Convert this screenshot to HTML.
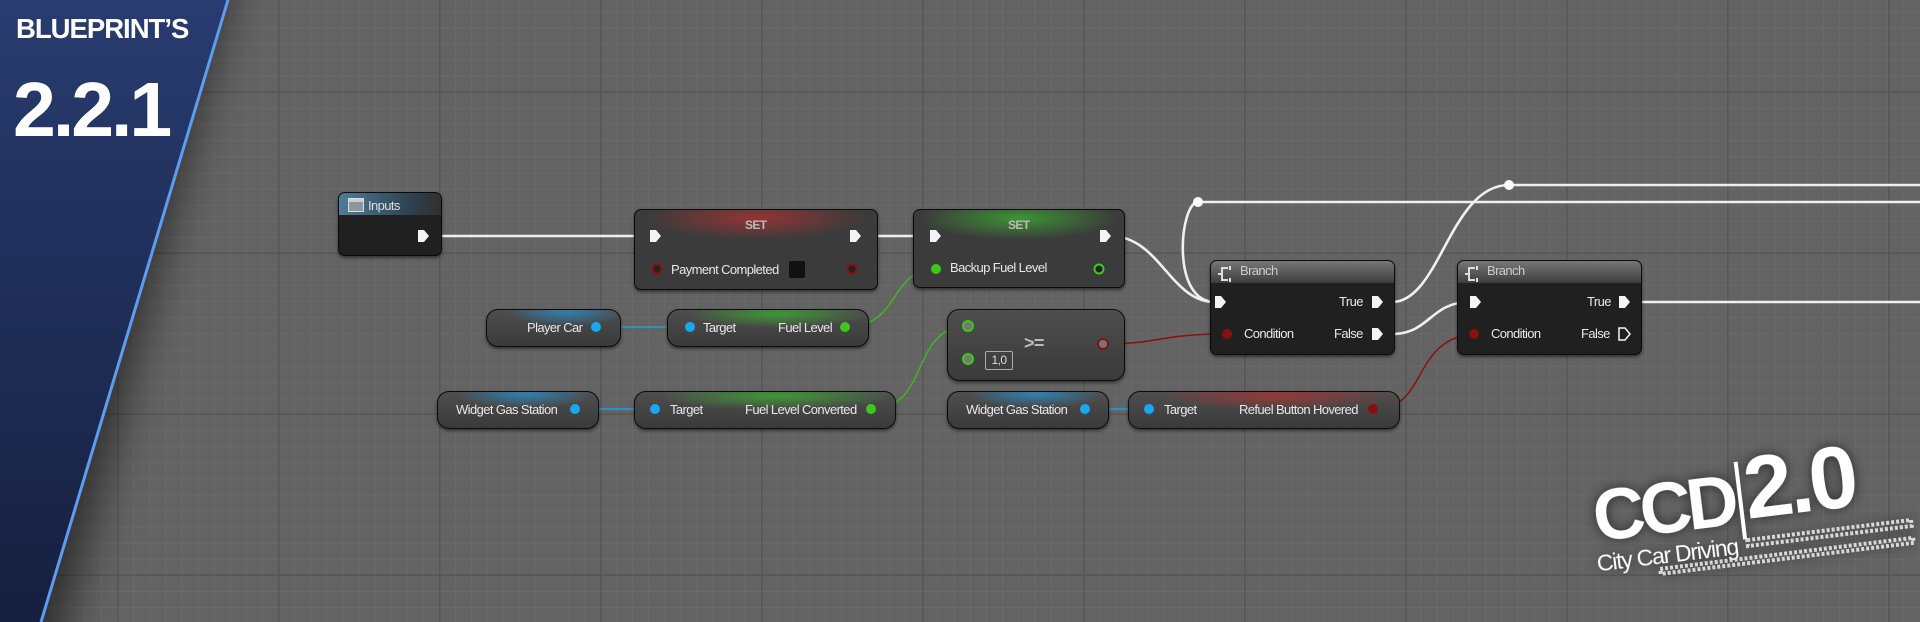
<!DOCTYPE html><html><head><meta charset="utf-8"><style>
*{margin:0;padding:0;box-sizing:border-box}
html,body{width:1920px;height:622px;overflow:hidden}
body{position:relative;background:#636363;font-family:"Liberation Sans",sans-serif;color:#e8e8e8;font-size:13px;letter-spacing:-0.6px}
.grid{position:absolute;inset:0;
background-image:linear-gradient(90deg,#565656 1.5px,transparent 1.5px),linear-gradient(0deg,#565656 1.5px,transparent 1.5px),linear-gradient(90deg,#6a6a6a 1px,transparent 1px),linear-gradient(0deg,#6a6a6a 1px,transparent 1px);
background-size:161px 161px,161px 161px,16.1px 16.1px,16.1px 16.1px;background-position:117px 0,0 93px,117px 0,0 93px}
.n{position:absolute;border:1px solid #0b0b0b;border-radius:7px;box-shadow:0 2px 3px rgba(0,0,0,.5)}
.ex{background:#1f201f}
.pu{background:linear-gradient(#4e4e4e,#3a3a3a);border-radius:12px}
.t{position:absolute;white-space:nowrap;margin-top:2px}
svg{position:absolute;left:0;top:0;overflow:hidden}
</style></head><body>
<div class="grid"></div>
<svg width="1920" height="622">
<defs><filter id="bl" x="-50%" y="-10%" width="200%" height="120%"><feGaussianBlur stdDeviation="22"/></filter></defs>
<polygon points="-100,-50 240,-50 50,680 -100,680" fill="#000" opacity=".55" filter="url(#bl)"/>
<g fill="none" stroke-width="2.6">
<path d="M442,236 H650" stroke="#f0f0f0"/>
<path d="M858,236 H930" stroke="#f0f0f0"/>
<path d="M1110,236 C1160,236 1170,302 1215,302" stroke="#f0f0f0"/>
<path d="M1198,202 C1180,202 1170,302 1215,302" stroke="#f0f0f0"/>
<path d="M1198,202 H1920" stroke="#f0f0f0"/>
<path d="M1392,302 C1440,302 1450,185 1509,185 H1920" stroke="#f0f0f0"/>
<path d="M1392,334 C1430,334 1430,302 1470,302" stroke="#f0f0f0"/>
<path d="M1622,302 H1920" stroke="#f0f0f0"/>
</g>
<circle cx="1198" cy="202" r="5" fill="#fff"/><circle cx="1509" cy="185" r="5" fill="#fff"/>
<g fill="none" stroke-width="1.5">
<path d="M600,327 H690" stroke="#1aa0e0"/>
<path d="M598,409 H655" stroke="#1aa0e0"/>
<path d="M1086,409 H1146" stroke="#1aa0e0"/>
<path d="M846,327 C900,327 890,269 935,269" stroke="#3cb81c"/>
<path d="M872,409 C930,409 910,326 968,326" stroke="#3cb81c"/>
<path d="M1104,344 C1160,344 1160,334 1225,334" stroke="#8a0f0f"/>
<path d="M1375,409 C1430,409 1410,334 1480,334" stroke="#8a0f0f"/>
</g>
</svg>
<!-- left banner -->
<svg width="240" height="622"><defs><linearGradient id="bg2" x1="0" y1="0" x2="0" y2="1"><stop offset="0" stop-color="#283c70"/><stop offset="1" stop-color="#161f3e"/></linearGradient></defs>
<polygon points="0,0 228,0 41,622 0,622" fill="url(#bg2)"/>
<line x1="228" y1="0" x2="41" y2="622" stroke="#5e9cf2" stroke-width="3"/></svg>
<div class="t" style="left:16px;top:13px;font-weight:bold;font-size:27.5px;color:#fff;letter-spacing:-1px;margin:0">BLUEPRINT’S</div>
<div class="t" style="left:13px;top:60px;font-weight:bold;font-size:77px;line-height:100px;color:#fff;letter-spacing:-3px;margin:0">2.2.1</div>

<!-- Inputs -->
<div class="n ex" style="left:338px;top:192px;width:104px;height:64px;overflow:hidden">
<div style="height:22px;background:linear-gradient(90deg,#4f7d9a,#2d4150 70%,#303030)"></div></div>
<div style="position:absolute;left:348px;top:198px;width:16px;height:14px;border:1px solid #ddd;background:linear-gradient(#ccc 3px,#8a96a0 3px)"></div>
<div class="t" style="left:368px;top:196px;color:#ddd">Inputs</div>

<!-- SET1 -->
<div class="n" style="left:634px;top:209px;width:244px;height:81px;background:radial-gradient(ellipse 110px 22px at 50% 8px,rgba(170,50,50,.8),transparent),#3b3b3b"></div>
<div class="t" style="left:745px;top:216px;color:#bbb;font-size:12px;font-weight:bold">SET</div>
<div class="t" style="left:671px;top:260px">Payment Completed</div>
<div style="position:absolute;left:789px;top:261px;width:16px;height:17px;background:#111;border-radius:2px"></div>
<!-- SET2 -->
<div class="n" style="left:913px;top:209px;width:212px;height:79px;background:radial-gradient(ellipse 100px 22px at 50% 8px,rgba(60,170,50,.8),transparent),#3b3b3b"></div>
<div class="t" style="left:1008px;top:216px;color:#bbb;font-size:12px;font-weight:bold">SET</div>
<div class="t" style="left:950px;top:258px">Backup Fuel Level</div>

<!-- Branch1 -->
<div class="n ex" style="left:1210px;top:260px;width:185px;height:95px;overflow:hidden"><div style="height:22px;background:linear-gradient(#777,#3d3d3d)"></div></div>
<div class="t" style="left:1240px;top:261px;color:#ccc">Branch</div>
<div class="t" style="left:1339px;top:292px">True</div>
<div class="t" style="left:1244px;top:324px">Condition</div>
<div class="t" style="left:1334px;top:324px">False</div>
<!-- Branch2 -->
<div class="n ex" style="left:1457px;top:260px;width:185px;height:95px;overflow:hidden"><div style="height:22px;background:linear-gradient(#777,#3d3d3d)"></div></div>
<div class="t" style="left:1487px;top:261px;color:#ccc">Branch</div>
<div class="t" style="left:1587px;top:292px">True</div>
<div class="t" style="left:1491px;top:324px">Condition</div>
<div class="t" style="left:1581px;top:324px">False</div>

<!-- pure nodes -->
<div class="n pu" style="left:486px;top:309px;width:135px;height:38px;background:radial-gradient(ellipse 60px 14px at 60% 2px,rgba(40,140,200,.8),transparent),linear-gradient(#4e4e4e,#3a3a3a)"></div>
<div class="t" style="left:527px;top:318px">Player Car</div>
<div class="n pu" style="left:667px;top:309px;width:202px;height:38px;background:radial-gradient(ellipse 90px 14px at 55% 4px,rgba(60,170,50,.8),transparent),linear-gradient(#4e4e4e,#3a3a3a)"></div>
<div class="t" style="left:703px;top:318px">Target</div><div class="t" style="left:778px;top:318px">Fuel Level</div>
<div class="n pu" style="left:947px;top:309px;width:178px;height:72px"></div>
<div class="t" style="left:1024px;top:331px;font-size:18px;font-weight:bold;color:#bbb">&gt;=</div>
<div style="position:absolute;left:985px;top:351px;width:28px;height:19px;border:1px solid #aaa;border-radius:2px;color:#ddd;font-size:12px;text-align:center;line-height:17px">1,0</div>
<div class="n pu" style="left:437px;top:391px;width:162px;height:38px;background:radial-gradient(ellipse 70px 14px at 55% 2px,rgba(40,140,200,.8),transparent),linear-gradient(#4e4e4e,#3a3a3a)"></div>
<div class="t" style="left:456px;top:400px">Widget Gas Station</div>
<div class="n pu" style="left:634px;top:391px;width:262px;height:38px;background:radial-gradient(ellipse 120px 14px at 55% 4px,rgba(60,170,50,.8),transparent),linear-gradient(#4e4e4e,#3a3a3a)"></div>
<div class="t" style="left:670px;top:400px">Target</div><div class="t" style="left:745px;top:400px">Fuel Level Converted</div>
<div class="n pu" style="left:947px;top:391px;width:162px;height:38px;background:radial-gradient(ellipse 70px 14px at 55% 2px,rgba(40,140,200,.8),transparent),linear-gradient(#4e4e4e,#3a3a3a)"></div>
<div class="t" style="left:966px;top:400px">Widget Gas Station</div>
<div class="n pu" style="left:1128px;top:391px;width:272px;height:38px;background:radial-gradient(ellipse 120px 14px at 55% 4px,rgba(170,50,50,.8),transparent),linear-gradient(#4e4e4e,#3a3a3a)"></div>
<div class="t" style="left:1164px;top:400px">Target</div><div class="t" style="left:1239px;top:400px">Refuel Button Hovered</div>

<!-- pins -->
<svg width="1920" height="622">
<g fill="#f4f4f4">
<path d="M418,230 h6 l5,6 l-5,6 h-6z"/>
<path d="M650,230 h6 l5,6 l-5,6 h-6z"/><path d="M850,230 h6 l5,6 l-5,6 h-6z"/>
<path d="M930,230 h6 l5,6 l-5,6 h-6z"/><path d="M1100,230 h6 l5,6 l-5,6 h-6z"/>
<path d="M1215,296 h6 l5,6 l-5,6 h-6z"/><path d="M1372,296 h6 l5,6 l-5,6 h-6z"/><path d="M1372,328 h6 l5,6 l-5,6 h-6z"/>
<path d="M1470,296 h6 l5,6 l-5,6 h-6z"/><path d="M1619,296 h6 l5,6 l-5,6 h-6z"/>
</g>
<path d="M1619,328 h6 l5,6 l-5,6 h-6z" fill="none" stroke="#f4f4f4" stroke-width="1.5"/>
<g><circle cx="657" cy="269" r="4.5" fill="#222" stroke="#8a0f0f" stroke-width="2"/><circle cx="852" cy="269" r="4.5" fill="#222" stroke="#8a0f0f" stroke-width="2"/>
<circle cx="1227" cy="334" r="5" fill="#8a0f0f"/><circle cx="1474" cy="334" r="5" fill="#8a0f0f"/>
<circle cx="936" cy="269" r="5" fill="#3cc81c"/><circle cx="1099" cy="269" r="4.5" fill="#222" stroke="#3cc81c" stroke-width="2"/>
<circle cx="596" cy="327" r="5" fill="#18a8f0"/><circle cx="690" cy="327" r="5" fill="#18a8f0"/><circle cx="845" cy="327" r="5" fill="#3cc81c"/>
<circle cx="968" cy="326" r="5" fill="#777" stroke="#3cc81c" stroke-width="2"/><circle cx="968" cy="359" r="5" fill="#777" stroke="#3cc81c" stroke-width="2"/>
<circle cx="1103" cy="344" r="5" fill="#777" stroke="#8a0f0f" stroke-width="2"/>
<circle cx="575" cy="409" r="5" fill="#18a8f0"/><circle cx="655" cy="409" r="5" fill="#18a8f0"/><circle cx="871" cy="409" r="5" fill="#3cc81c"/>
<circle cx="1085" cy="409" r="5" fill="#18a8f0"/><circle cx="1149" cy="409" r="5" fill="#18a8f0"/><circle cx="1373" cy="409" r="5" fill="#8a0f0f"/></g>
<g fill="none" stroke="#ddd" stroke-width="2"><path d="M1228,268 h-6 v12 h6 M1222,274 h-4 M1230,266 v4 M1230,278 v4"/><path d="M1475,268 h-6 v12 h6 M1469,274 h-4 M1477,266 v4 M1477,278 v4"/></g>
<!-- logo -->
<g transform="translate(1588,474) rotate(-7)" fill="#fff" style="filter:drop-shadow(0 0 6px rgba(0,0,0,.6))">
<text x="0" y="68" font-family="Liberation Sans,sans-serif" font-weight="bold" font-size="72" letter-spacing="-5">CCD</text>
<rect x="146" y="6" width="4" height="78"/>
<text x="153" y="64" font-family="Liberation Sans,sans-serif" font-weight="bold" font-size="88" letter-spacing="-4">2.0</text>
<text x="-2" y="98" font-family="Liberation Sans,sans-serif" font-size="23" letter-spacing="-1.2">City Car Driving</text>
<g opacity=".85">
<rect x="60" y="103" width="255" height="5" stroke="#eee" stroke-dasharray="3 2" fill="none" stroke-width="4"/>
<rect x="150" y="85" width="165" height="6" stroke="#eee" stroke-dasharray="3 2" fill="none" stroke-width="4"/>
</g>
</g>
</svg>
</body></html>
